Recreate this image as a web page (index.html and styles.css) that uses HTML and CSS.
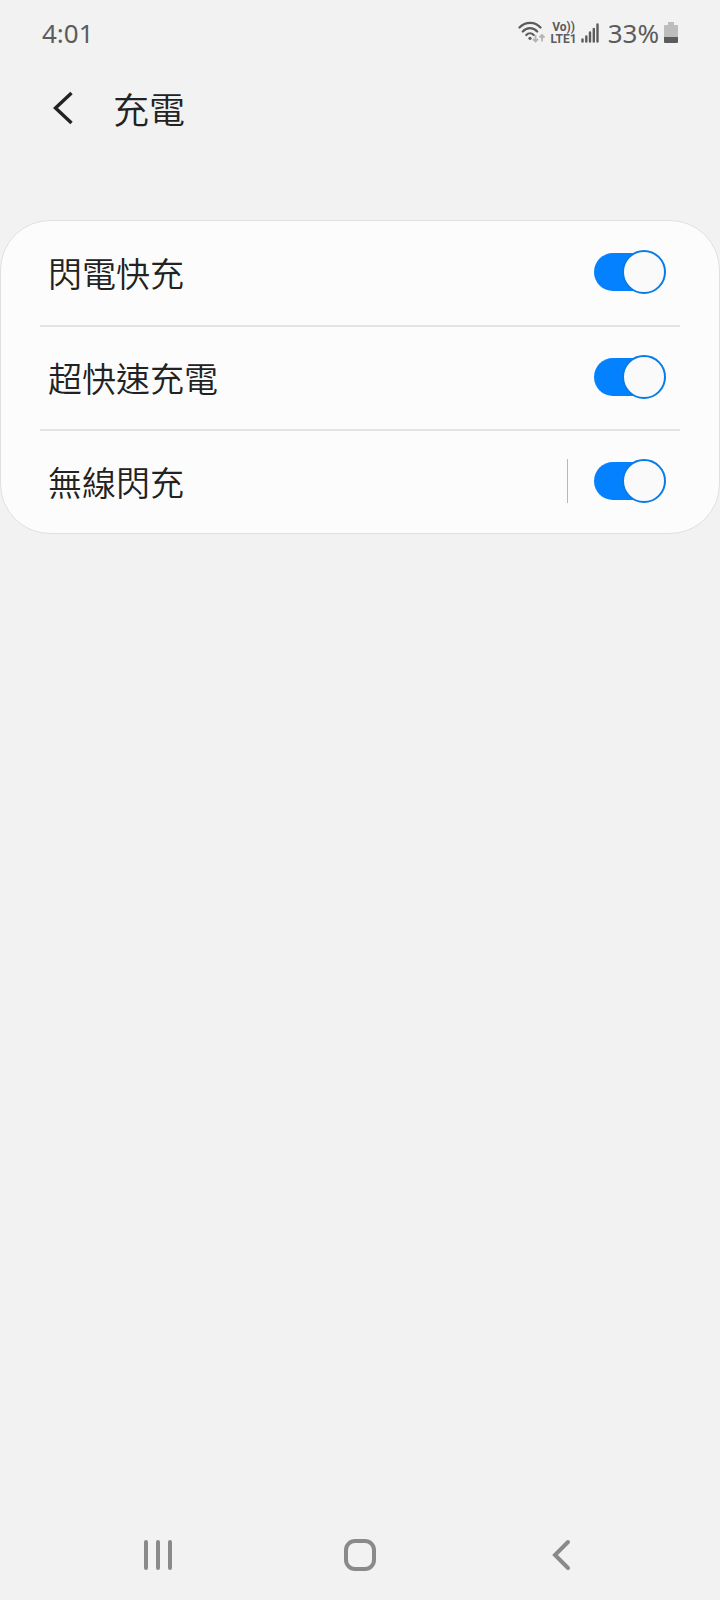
FILE: index.html
```html
<!DOCTYPE html>
<html lang="zh-Hant">
<head>
    <meta charset="UTF-8">
    <meta name="viewport" content="width=device-width, initial-scale=1">
    <title>充電</title>
    <link rel="stylesheet" href="styles.css">
</head>
<body>

<div class="status">
    <time class="clock">4:01</time>
    <svg class="wifi" width="28" height="24" viewBox="0 0 28 24" aria-hidden="true">
        <g fill="none" stroke="#5c5c5c" stroke-width="2.3" stroke-linecap="round">
            <path d="M1.5 6.500C7.500 .2 17 .2 22.500 6.500"/>
            <path d="M4.800 10.500C9 6 15 6 19.200 10.500"/>
            <path d="M8.300 14C10.500 11.800 13.500 11.800 15.700 14"/>
        </g>
        <circle cx="12" cy="17.300" r="1.600" fill="#5c5c5c"/>
        <g fill="none" stroke="#b4b4b4" stroke-width="1.800">
            <path d="M17.500 14v6.500M15 18l2.500 2.500l2.500-2.500"/>
            <path d="M24 20.500v-6.500M21.500 16.500l2.500-2.500l2.500 2.500"/>
        </g>
    </svg>
    <div class="volte">
        <span>Vo))</span>
        <span>LTE1</span>
    </div>
    <svg class="signal" width="18" height="20" viewBox="0 0 18 20" aria-hidden="true">
        <path d="M1.500 16.500v2M5.300 13.500v5M9 9.500v9M12.800 6v12.500M16.500 1.500v17" fill="none" stroke="#5c5c5c" stroke-width="2.400" stroke-linecap="round"/>
    </svg>
    <span class="percent">33%</span>
    <svg class="battery" width="14" height="21" viewBox="0 0 14 21" aria-hidden="true">
        <path d="M4 0h6v3h3q1 0 1 1v12H0V4q0-1 1-1h3z" fill="#bdbdbd"/>
        <path d="M0 15h14v5q0 1-1 1H1q-1 0-1-1z" fill="#5c5c5c"/>
    </svg>
</div>

<header class="header">
    <button class="up" type="button" aria-label="返回">
        <svg width="20" height="34" viewBox="0 0 20 34">
            <path d="M18.500 2L2.500 17L18.500 32" fill="none" stroke="#222" stroke-width="3.4"/>
        </svg>
    </button>
    <h1>充電</h1>
</header>

<main class="card">
    <div class="row">
        <label for="fast">閃電快充</label>
        <input class="toggle" type="checkbox" role="switch" id="fast" checked>
    </div>
    <div class="row">
        <label for="super">超快速充電</label>
        <input class="toggle" type="checkbox" role="switch" id="super" checked>
    </div>
    <div class="row split">
        <label for="wireless">無線閃充</label>
        <input class="toggle" type="checkbox" role="switch" id="wireless" checked>
    </div>
</main>

<nav class="nav">
    <button type="button" aria-label="最近">
        <svg width="32" height="34" viewBox="0 0 32 34">
            <path d="M4 4v26M16 4v26M28 4v26" fill="none" stroke="#8a8a8a" stroke-width="4" stroke-linecap="round"/>
        </svg>
    </button>
    <button type="button" aria-label="首頁">
        <svg width="32" height="34" viewBox="0 0 32 34">
            <rect x="2" y="3" width="28" height="28" rx="9" fill="none" stroke="#8a8a8a" stroke-width="4"/>
        </svg>
    </button>
    <button type="button" aria-label="返回">
        <svg width="32" height="34" viewBox="0 0 32 34">
            <path d="M22 4L9 17L22 30" fill="none" stroke="#8a8a8a" stroke-width="4" stroke-linecap="round"/>
        </svg>
    </button>
</nav>

</body>
</html>
```

FILE: styles.css
```css
*, *::before, *::after {
    box-sizing: border-box;
}

body {
    margin: 0;
    min-height: 100vh;
    display: flex;
    flex-direction: column;
    background-color: #f2f2f2;
    color: #222;
    font-family: "Noto Sans", "Noto Sans CJK TC", sans-serif;
}

button {
    padding: 0;
    border: 0;
    background: none;
}

svg {
    display: block;
    flex: none;
}

/* status bar */
.status {
    display: flex;
    align-items: center;
    height: 65px;
    padding: 0 42px;
    color: #5c5c5c;
    font-size: 26px;
}

.clock {
    margin-right: auto;
}

.volte {
    margin: 0 4px;
    display: flex;
    flex-direction: column;
    align-items: center;
    font-family: Roboto, sans-serif;
    font-size: 12px;
    line-height: 12px;
    font-weight: 700;
}

.percent {
    margin: 0 5px 0 9px;
}

/* title */
.header {
    display: flex;
    align-items: center;
    gap: 40px;
    height: 85px;
    padding: 0 53px;
}

h1 {
    margin: 0;
    font-family: "Noto Sans CJK TC", sans-serif;
    font-size: 36px;
    font-weight: 350;
    line-height: 48px;
}

/* settings list */
.card {
    margin-top: 70px;
    padding: 0 39px;
    border: 1px solid #e0e0e0;
    border-radius: 50px;
    background-color: #fcfcfc;
}

.row {
    display: flex;
    align-items: center;
    gap: 26px;
    height: 104px;
    padding: 0 14px 2px 8px;

    & + & {
        border-top: 2px solid #e4e4e4;
    }
}

.row label {
    flex: 1;
    padding-top: 2px;
    font-family: "Noto Sans CJK TC", sans-serif;
    font-size: 34px;
    font-weight: 350;
    line-height: 48px;
}

.split::after {
    content: '';
    order: 1;
    width: 1px;
    height: 44px;
    background-color: #b8b8b8;
}

.split .toggle {
    order: 2;
}

.toggle {
    appearance: none;
    display: grid;
    align-items: center;
    width: 72px;
    height: 44px;
    margin: 0;

    &::before, &::after {
        content: '';
        grid-area: 1 / 1;
    }

    &::before {
        width: 66px;
        height: 38px;
        border-radius: 19px;
        background-color: #0381fe;
    }

    &::after {
        justify-self: end;
        width: 44px;
        height: 44px;
        border: 2px solid #087ce6;
        border-radius: 50%;
        background-color: #fafafa;
    }

    &:not(:checked)::before {
        background-color: #bbb;
    }

    &:not(:checked)::after {
        justify-self: start;
        border-color: #999;
    }
}

/* navigation bar */
.nav {
    display: grid;
    grid-template-columns: repeat(3, 1fr);
    height: 90px;
    margin-top: auto;
    padding: 0 8%;

    button {
        display: grid;
        place-items: center;
    }
}
```
